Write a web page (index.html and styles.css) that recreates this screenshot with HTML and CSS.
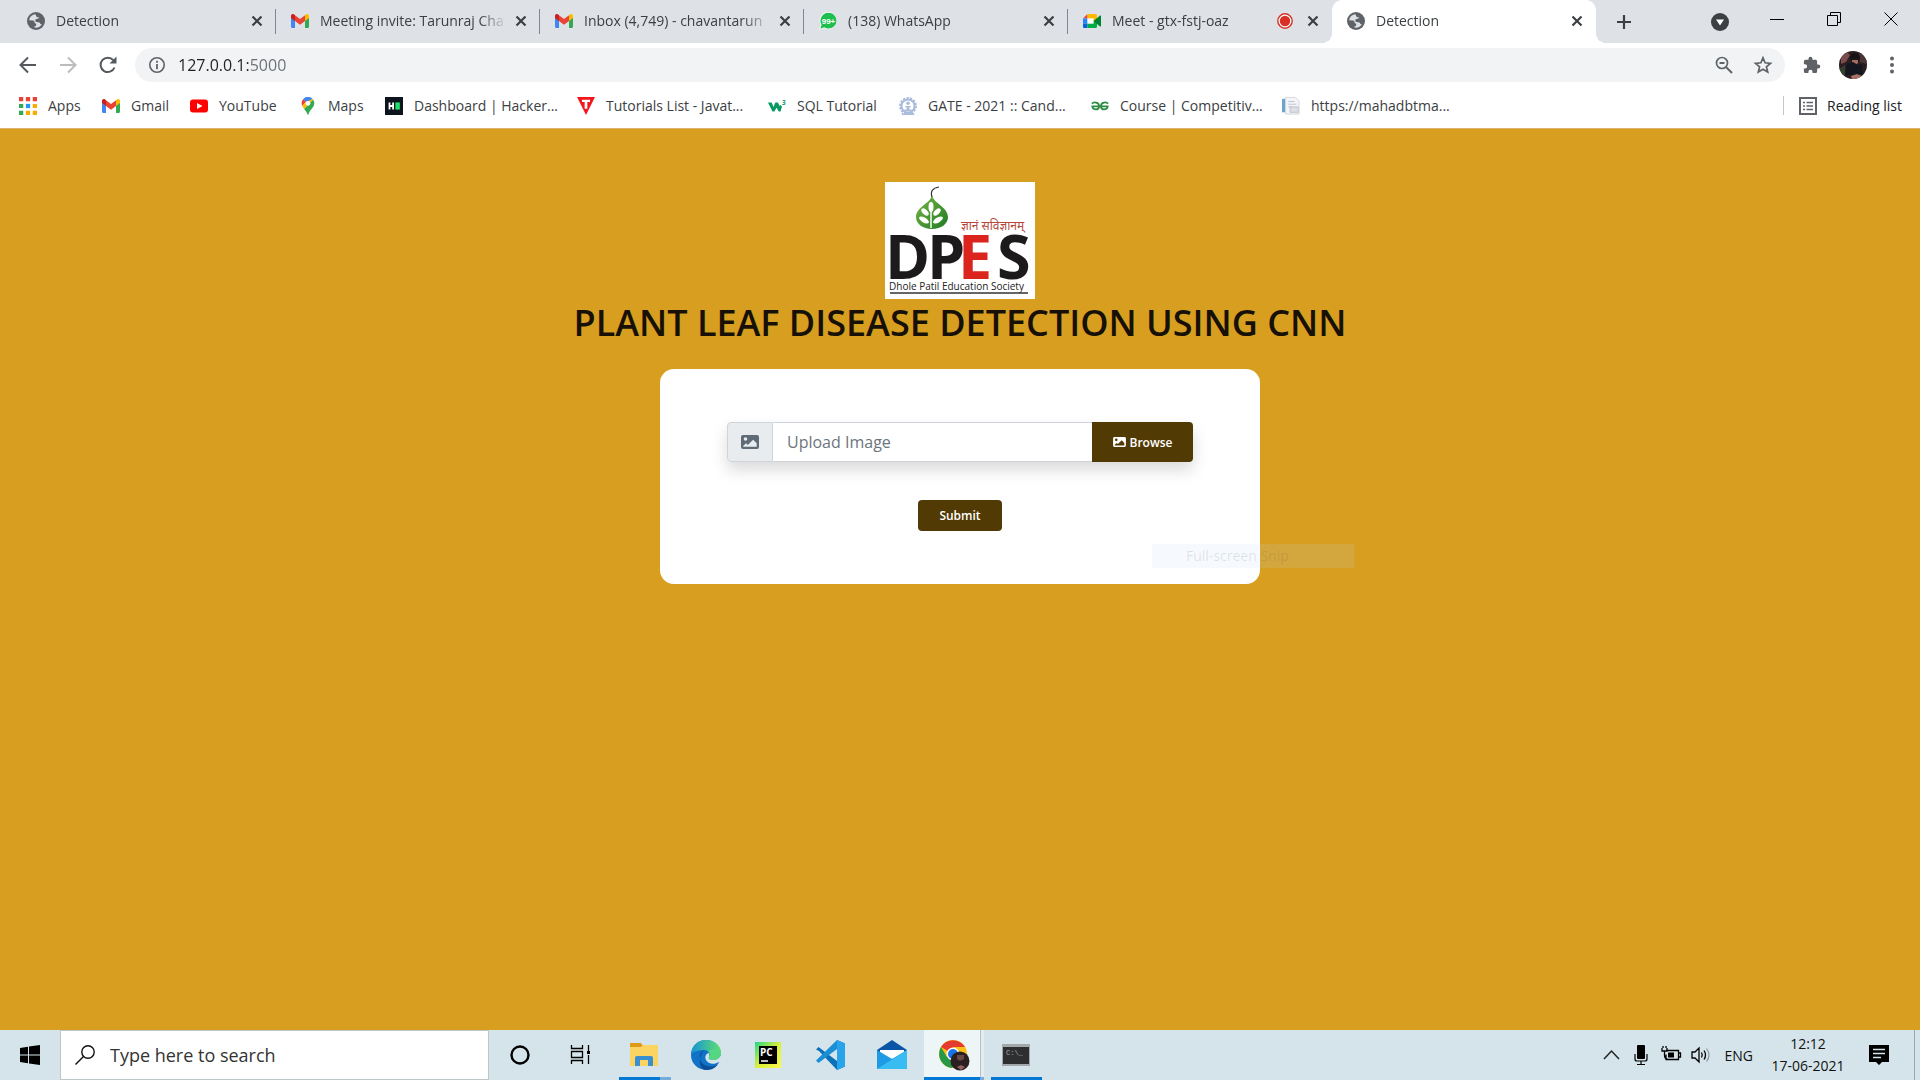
FILE: index.html
```html
<!DOCTYPE html>
<html lang="en">
<head>
<meta charset="utf-8">
<meta name="viewport" content="width=device-width, initial-scale=1">
<title>Detection</title>
<link rel="stylesheet" href="styles.css">
</head>
<body>
<svg class="defs" aria-hidden="true">
  <symbol id="globe" viewBox="0 0 18 18"><circle cx="9" cy="9" r="9" fill="#5f6368"/><path d="M8.2 2.2C5 2.700 2.400 5 2.200 8.300l3.300 0.200c1.500 0 2 .6 2 1.700 0 1 .6 1.200 1.700 1.300v1.700c-.1.700-.8 1-1.700 1v1.400c3 .6 6.200-.9 7.500-3.600-.9.400-1.600.2-1.900-.6-.4-1-1-1.200-2.200-1.200-1.900 0-2.600-.6-2.600-1.700s.8-1.800 2.100-1.800c1.200 0 1.800-.5 1.900-1.400-1.800.3-2.900-.1-3.100-1.300-.1-.8-.6-1.100-1-1.800z" fill="#dee1e6"/></symbol>
  <symbol id="gmail" viewBox="0 0 18 14"><path d="M0 2v10.500C0 13.400.6 14 1.500 14H4V5z" fill="#4285f4"/><path d="M18 2v10.500c0 .9-.6 1.500-1.500 1.500H14V5z" fill="#34a853"/><path d="M4 1.200V7l5 3.800L14 7V1.200L9 5z" fill="#ea4335"/><path d="M0 2v2l4 3V1.200L3.200.6C1.800-.5 0 .4 0 2z" fill="#c5221f"/><path d="M18 2v2l-4 3V1.200l.8-.6C16.200-.5 18 .4 18 2z" fill="#fbbc04"/></symbol>
  <symbol id="close" viewBox="0 0 12 12"><path d="M1.500 1.500l9 9m0-9l-9 9" stroke="#3c4043" stroke-width="2.200" fill="none"/></symbol>
  <symbol id="picture" viewBox="0 0 18 14"><path fill="currentColor" fill-rule="evenodd" d="M2 0h14a2 2 0 0 1 2 2v10a2 2 0 0 1-2 2H2a2 2 0 0 1-2-2V2a2 2 0 0 1 2-2zm2.500 2.200a1.800 1.800 0 1 0 0 3.600 1.800 1.800 0 0 0 0-3.600zM2.300 11.800h13.400V8.300l-3.600-3.600-5.300 5.200-1.700-1.600-2.800 2.500z"/></symbol>
</svg>

<header class="browser">
  <div class="tabstrip">
    <div class="tabs">
      <div class="tab"><svg class="favicon"><use href="#globe"/></svg><a class="tab-title" href="#">Detection</a><button class="tab-close" aria-label="Close tab"><svg><use href="#close"/></svg></button></div>
      <div class="tab"><svg class="favicon"><use href="#gmail"/></svg><a class="tab-title" href="#">Meeting invite: Tarunraj Cha</a><button class="tab-close" aria-label="Close tab"><svg><use href="#close"/></svg></button></div>
      <div class="tab"><svg class="favicon"><use href="#gmail"/></svg><a class="tab-title" href="#">Inbox (4,749) - chavantarun</a><button class="tab-close" aria-label="Close tab"><svg><use href="#close"/></svg></button></div>
      <div class="tab"><svg class="favicon" viewBox="0 0 18 18"><path d="M9.500 0A8.500 8.500 0 1 1 5.200 16L0 18l1.800-5.300A8.500 8.500 0 0 1 9.500 0z" fill="#fff"/><path d="M9.500.8A7.900 7.900 0 1 1 5.200 15.300L1.300 16.700l1.300-4A7.900 7.900 0 0 1 9.500.8z" fill="#1fbf4f"/><text x="9.500" y="12" class="wa-count">99+</text></svg><a class="tab-title" href="#">(138) WhatsApp</a><button class="tab-close" aria-label="Close tab"><svg><use href="#close"/></svg></button></div>
      <div class="tab no-divider"><svg class="favicon" viewBox="0 0 18 18"><path d="M4.500 2v4.500H0z" fill="#ea4335"/><path d="M0 6.500h4.500v5H0z" fill="#2684fc"/><path d="M0 11.500h4.500V16H1.300A1.300 1.300 0 0 1 0 14.700z" fill="#0066da"/><path d="M4.500 2h8A1.500 1.500 0 0 1 14 3.500V8l-3.500 1.500v-3h-6z" fill="#ffba00"/><path d="M4.500 11.500h6v-3L14 10v4.500a1.500 1.500 0 0 1-1.500 1.500h-8z" fill="#00ac47"/><path d="M4.500 6.500h6v5h-6z" fill="#fff"/><path d="M10.500 9L17 3.500c.4-.3 1 0 1 .5v10c0 .5-.6.8-1 .5z" fill="#00832d"/></svg><a class="tab-title" href="#">Meet - gtx-fstj-oaz</a><svg class="rec" viewBox="0 0 16 16"><circle cx="8" cy="8" r="7.200" fill="#fff" stroke="#d93025" stroke-width="1.400"/><circle cx="8" cy="8" r="5.200" fill="#d93025"/></svg><button class="tab-close" aria-label="Close tab"><svg><use href="#close"/></svg></button></div>
      <div class="tab active"><svg class="favicon"><use href="#globe"/></svg><a class="tab-title" href="#">Detection</a><button class="tab-close" aria-label="Close tab"><svg><use href="#close"/></svg></button></div>
      <button class="new-tab" aria-label="New tab"><svg viewBox="0 0 16 16"><path d="M8 1v14M1 8h14" stroke="#3c4043" stroke-width="2.200"/></svg></button>
    </div>
    <div class="window-controls">
      <button aria-label="Search tabs"><svg class="down" viewBox="0 0 18 18"><circle cx="9" cy="9" r="9" fill="#3c4043"/><path d="M5 6.500h8l-4 6z" fill="#fff"/></svg></button>
      <button aria-label="Minimize"><svg viewBox="0 0 14 14"><path d="M0 7.500h14" stroke="#000"/></svg></button>
      <button aria-label="Restore"><svg viewBox="0 0 14 14"><path d="M.5 3.500h10v10H.5zM3.500 3.500v-3h10v10h-3" stroke="#000" fill="none"/></svg></button>
      <button aria-label="Close"><svg viewBox="0 0 14 14"><path d="M.5.500l13 13m0-13l-13 13" stroke="#000"/></svg></button>
    </div>
  </div>

  <div class="toolbar">
    <button aria-label="Back"><svg viewBox="0 0 18 18"><path d="M17 9H2m7-7.500L1.500 9 9 16.500" fill="none" stroke="#55595e" stroke-width="2"/></svg></button>
    <button aria-label="Forward"><svg viewBox="0 0 18 18"><path d="M1 9h15M9 1.500L16.500 9 9 16.500" fill="none" stroke="#babcbe" stroke-width="2"/></svg></button>
    <button aria-label="Reload"><svg viewBox="0 0 18 18"><path d="M15.500 11.500A7.200 7.200 0 1 1 14.300 4.200" fill="none" stroke="#55595e" stroke-width="2"/><path d="M17.500.500v7h-7z" fill="#55595e"/></svg></button>
    <div class="omnibox">
      <svg viewBox="0 0 18 18"><circle cx="9" cy="9" r="7.200" fill="none" stroke="#5f6368" stroke-width="1.600"/><path d="M9 4.700v2M9 8v5.200" stroke="#5f6368" stroke-width="1.800"/></svg>
      <input class="url" type="text" aria-label="Address" value="127.0.0.1:5000">
      <button aria-label="Zoom"><svg viewBox="0 0 18 18"><circle cx="7" cy="7" r="5.500" fill="none" stroke="#5f6368" stroke-width="1.700"/><path d="M11 11l6 6M4.500 7h5" stroke="#5f6368" stroke-width="1.900"/></svg></button>
      <button aria-label="Bookmark"><svg viewBox="0 0 18 18"><path d="M9 1.800l2.100 5 5.400.5-4.100 3.500 1.300 5.300L9 13.300l-4.700 2.800 1.300-5.300L1.500 7.300l5.400-.5z" fill="none" stroke="#5f6368" stroke-width="1.700"/></svg></button>
    </div>
    <button aria-label="Extensions"><svg viewBox="0 0 20 20"><path d="M17 9.500h-1.300V6a1.700 1.700 0 0 0-1.700-1.700h-3.500V3a2.200 2.200 0 0 0-4.400 0v1.300H2.700A1.700 1.700 0 0 0 1 6v3.300h1.300a2.300 2.300 0 0 1 0 4.600H1v3.300A1.800 1.800 0 0 0 2.700 19H6v-1.300a2.300 2.300 0 0 1 4.600 0V19H14a1.700 1.700 0 0 0 1.700-1.800v-3.300H17a2.200 2.200 0 0 0 0-4.400z" fill="#5f6368"/></svg></button>
    <button class="avatar" aria-label="Profile"><svg viewBox="0 0 28 28"><clipPath id="face"><circle cx="14" cy="14" r="14"/></clipPath><g clip-path="url(#face)"><path d="M0 0h28v28H0z" fill="#2a1d20"/><path d="M2 6l6-5 3 3-4 7-5 2z" fill="#7a4d4c"/><path d="M20 0l8 5v8l-7-2z" fill="#4c3436"/><circle cx="16" cy="7" r="5" fill="#171216"/><path d="M13 8h6v4l-3 2-3-2z" fill="#a06d5d"/><path d="M12 7h8v2h-8z" fill="#1c1519"/><path d="M8 13l6-2 5 3 4-1 1 11H6z" fill="#14161f"/><path d="M12 25l6-2 5 2-2 3h-8z" fill="#a86f62"/><path d="M0 18l6-4v10l-4 1z" fill="#31402c"/></g></svg></button>
    <button aria-label="Menu"><svg viewBox="0 0 18 18" fill="#5f6368"><circle cx="9" cy="2.500" r="2"/><circle cx="9" cy="9" r="2"/><circle cx="9" cy="15.500" r="2"/></svg></button>
  </div>

  <nav class="bookmarks">
    <div class="bookmark-list">
      <a href="#"><svg viewBox="0 0 17 17"><path fill="#ea4335" d="M0 0h4v4H0zM6.500 0h4v4h-4zM13 0h4v4h-4z"/><path fill="#34a853" d="M0 6.500h4v4H0zM0 13h4v4H0z"/><path fill="#2196f3" d="M6.500 6.500h4v4h-4z"/><path fill="#f9ab00" d="M13 6.500h4v4h-4zM6.500 13h4v4h-4zM13 13h4v4h-4z"/></svg>Apps</a>
      <a href="#"><svg viewBox="0 0 18 18"><use href="#gmail" y="2" width="18" height="14"/></svg>Gmail</a>
      <a href="#"><svg viewBox="0 0 18 18"><rect y="2.500" width="18" height="13" rx="3" fill="#f00"/><path d="M7 6l5.500 3L7 12z" fill="#fff"/></svg>YouTube</a>
      <a href="#"><svg viewBox="0 0 18 20"><path d="M9 0a7 7 0 0 0-5.400 2.500L7 5.400z" fill="#1a73e8"/><path d="M3.600 2.500A7 7 0 0 0 2.700 10l4-4.700z" fill="#ea4335"/><path d="M9 0L5.800 6.200l5.400 1.300 3.200-5A7 7 0 0 0 9 0z" fill="#4285f4"/><path d="M2.700 10l2 3.200L14.800 3A7 7 0 0 0 14 2L6.700 5.300z" fill="#fbbc04"/><path d="M14.800 3L4.700 13.200C6.500 15.500 8 17 8.200 19c.2 1 1.400 1 1.600 0C10.500 14.500 16 12 16 7a7 7 0 0 0-1.200-4z" fill="#34a853"/><path d="M3.600 2.500A7 7 0 0 1 13.500 1.700L9 4.500z" fill="#4285f4"/><circle cx="9" cy="7" r="2.600" fill="#fff"/></svg>Maps</a>
      <a href="#"><svg viewBox="0 0 20 20"><path d="M0 0h20v20H0z" fill="#0d141e"/><path d="M4 6h2v3h2V6h2v8H8v-3H6v3H4z" fill="#fff"/><path d="M11.500 6h5v8h-5z" fill="#1ee06b"/></svg>Dashboard | Hacker...</a>
      <a href="#"><svg viewBox="0 0 20 20"><path d="M0 0h20L10 20z" fill="#f4161c"/><path d="M5.500 3h9v2.500h-3V13h-3V5.500h-3z" fill="#fff"/></svg>Tutorials List - Javat...</a>
      <a href="#"><svg viewBox="0 0 20 20"><path d="M0 6h4l2.200 5L8 6h3l2 4 1-1 1.500 1.500L14 16h-2l-2.500-4L7 16H5z" fill="#059862"/><text x="15.500" y="9" class="w3-power">3</text></svg>SQL Tutorial</a>
      <a href="#"><svg viewBox="0 0 20 20"><circle cx="10" cy="10" r="8.700" fill="none" stroke="#a9badb" stroke-width="2.400" stroke-dasharray="2.500 1.400"/><circle cx="10" cy="10" r="7.300" fill="none" stroke="#a9badb" stroke-width="2.200"/><circle cx="10" cy="7" r="2" fill="#a9badb"/><path d="M7 10h6v1.500H7zM8.500 11h3v3h-3zM6 14h8v1.500H6zM3 18h14v2H3z" fill="#a9badb"/></svg>GATE - 2021 :: Cand...</a>
      <a href="#"><svg viewBox="0 0 20 20"><path d="M1 7.300C3 5 9 5.500 9 10.200 9 15 2 15 1.500 10.500H18.500C18 15 11 15 11 10.200 11 5.500 17 5 19 7.300" fill="none" stroke="#2f8d46" stroke-width="2"/></svg>Course | Competitiv...</a>
      <a href="#"><svg viewBox="0 0 20 20"><path d="M0 2h4v15H0z" fill="#69a5cf"/><path d="M4 .5h11l4 4V19H4z" fill="#f5f5f7" stroke="#d3d5da"/><path d="M7 5h7M7 8h9M7 11h5" stroke="#b9bec9"/><path d="M9 11h9v6H9z" fill="#dcdfe5" stroke="#bdc2cc"/></svg>https://mahadbtma...</a>
    </div>
    <a class="reading-list" href="#"><svg viewBox="0 0 18 18"><path d="M1 1h16v16H1z" fill="none" stroke="#5f6368" stroke-width="2"/><path d="M4 5.500h2m1.500 0H14M4 9h2m1.500 0H14m-10 3.500h2m1.500 0H14" stroke="#5f6368" stroke-width="1.700"/></svg>Reading list</a>
  </nav>
</header>

<main class="page">
  <svg class="logo" viewBox="0 0 150 117" role="img" aria-label="DPES">
    <defs><linearGradient id="leaf" x1="0" y1="0" x2="1" y2="1"><stop offset="0" stop-color="#79b843"/><stop offset="1" stop-color="#1e7a25"/></linearGradient></defs>
    <path d="M0 0h150v117H0z" fill="#fff"/>
    <path d="M47 13c1 8 16 12 16 22 0 7-7 12-16 12s-16-5-16-12c0-10 15-14 16-22z" fill="url(#leaf)"/>
    <path d="M47 15c-2-6 1-9 7-10" fill="none" stroke="#333" stroke-width="1.200"/>
    <path d="M46 46V29" stroke="#fff" stroke-width="1.500"/>
    <g fill="#fff"><ellipse cx="46" cy="25" rx="2.500" ry="5"/><ellipse cx="40" cy="30" rx="2.500" ry="4.500" transform="rotate(-45 40 30)"/><ellipse cx="52" cy="30" rx="2.500" ry="4.500" transform="rotate(45 52 30)"/><ellipse cx="39" cy="38" rx="2.500" ry="5.500" transform="rotate(-60 39 38)"/><ellipse cx="53" cy="38" rx="2.500" ry="5.500" transform="rotate(60 53 38)"/></g>
    <text x="76" y="48" class="logo-motto">ज्ञानं सविज्ञानम्</text>
    <text y="97" class="logo-name"><tspan x="0">D</tspan><tspan x="42">P</tspan><tspan x="73" class="logo-red">E</tspan><tspan x="112">S</tspan></text>
    <text x="4" y="108" class="logo-society">Dhole Patil Education Society</text>
    <path d="M5 111h138" stroke="#333" stroke-width="1.500"/>
  </svg>
  <h1>PLANT LEAF DISEASE DETECTION USING CNN</h1>
  <form class="card">
    <div class="upload">
      <label class="upload-icon" for="upload-name" aria-label="Image"><svg><use href="#picture"/></svg></label>
      <input id="upload-name" type="text" placeholder="Upload Image">
      <button type="button" class="browse"><svg><use href="#picture"/></svg>Browse</button>
    </div>
    <button type="submit" class="submit">Submit</button>
    <div class="snip">Full-screen Snip</div>
  </form>
</main>

<footer class="taskbar">
  <button class="start" aria-label="Start"><svg viewBox="0 0 20 20"><path d="M0 3l8-1.200v7.700H0zM9 1.600L20 0v9.500H9zM0 10.500h8v7.700L0 17zM9 10.500h11V20L9 18.400z"/></svg></button>
  <div class="search">
    <svg viewBox="0 0 20 20"><circle cx="13" cy="7" r="6.200" fill="none" stroke="#111" stroke-width="1.400"/><path d="M8.500 11.500L.5 19.500" stroke="#111" stroke-width="1.400"/></svg>
    <input type="text" aria-label="Search" placeholder="Type here to search">
  </div>
  <div class="apps">
    <button aria-label="Cortana"><svg viewBox="0 0 30 30"><circle cx="15" cy="15" r="8.500" fill="none" stroke="#000" stroke-width="2.400"/></svg></button>
    <button aria-label="Task view"><svg viewBox="0 0 30 30"><path d="M4.500 5v3.500h11V5M4.500 24v-3.500h11V24M4.500 11.500h11v6h-11zM21.500 5v6m0 4v9" fill="none" stroke="#000" stroke-width="1.300"/><path d="M20 11h3v3h-3z"/></svg></button>
    <button class="running grouped" aria-label="File Explorer"><svg viewBox="0 0 30 30"><path d="M1 3h11l2 3v3H1z" fill="#e09a1a"/><path d="M1 7h11l2-2h15v21H1z" fill="#fcd462"/><path d="M6 26V18a2 2 0 0 1 2-2h14a2 2 0 0 1 2 2v8h-5v-6h-8v6z" fill="#3a8fd0"/></svg></button>
    <button aria-label="Edge"><svg viewBox="0 0 30 30"><defs><linearGradient id="edge-top"><stop offset="0" stop-color="#1793d4"/><stop offset="1" stop-color="#5fe070"/></linearGradient></defs><circle cx="15" cy="15" r="15" fill="#1173c7"/><path d="M0 14C1 5 7 0 15 0c9 0 15 6 15 12.500 0 5-4 7.500-8 7.500-3 0-5-1-4-3 2-4-1-7-5-7C7 10 2 12 0 14z" fill="url(#edge-top)"/><path d="M14 10c-6 2-7 8-3 13 4 4 11 5 16 1-3 5-8 6-12 6C7 30 7 15 14 10z" fill="#0c4f97"/><path d="M18 13c-2 0-5 3-3 7s8 5 13 2l2 0V15c-2 4-5 5-8 5-3 0-5-1-4-3z" fill="#d5e4ea"/><path d="M30 12.500c0 5-4 7.500-8 7.500-3 0-5-1-4-3 1-2 1-4-1-6L28 8z" fill="#55d681"/></svg></button>
    <button aria-label="PyCharm"><svg viewBox="0 0 30 30"><defs><linearGradient id="pc" x1="0" y1="0" x2="1" y2="1"><stop offset="0" stop-color="#1fd789"/><stop offset=".5" stop-color="#d8f03c"/><stop offset="1" stop-color="#fcf84a"/></linearGradient></defs><path d="M2 2h26v26H2z" fill="url(#pc)"/><path d="M6 6h18v18H6z"/><text x="7" y="16" class="pc-text">PC</text><path d="M8 21h7" stroke="#fff" stroke-width="1.500"/></svg></button>
    <button aria-label="Visual Studio Code"><svg viewBox="0 0 30 30"><path d="M22 0l8 3.500v23L22 30 4 11l-3-1.500L3.500 7 22 21z" fill="#0a70b8"/><path d="M22 0v9L3.500 23 1 20.500z" fill="#1b8fd6"/><path d="M22 0l8 3.500v23L22 30z" fill="#29a4ea"/></svg></button>
    <button aria-label="Mail"><svg viewBox="0 0 30 30"><path d="M0 10L15 0l15 10v6H0z" fill="#0a55a5"/><path d="M3 10h24v8H3z" fill="#fff"/><path d="M0 10l15 9 15-9v19H0z" fill="#1f9ae4"/><path d="M0 29l30-19v19z" fill="#38bdf2"/></svg></button>
    <button class="running current" aria-label="Chrome"><svg viewBox="0 0 30 30"><circle cx="14" cy="14" r="14" fill="#fbc116"/><path d="M14 14L2 7A14 14 0 0 1 26 7H14z" fill="#e33b2e"/><path d="M2 7a14 14 0 0 0 11 21l6-10-11-1z" fill="#279847"/><circle cx="14" cy="14" r="6.500" fill="#fff"/><circle cx="14" cy="14" r="5" fill="#1a73e8"/><circle cx="21" cy="21" r="9.500" fill="#2a2022"/><path d="M18 15h7v4l-4 2-3-2z" fill="#6a4a46"/><path d="M18 27l4-2 4 2-4 3z" fill="#94605a"/></svg></button>
    <button class="running" aria-label="Command Prompt"><svg viewBox="0 0 30 30"><path d="M1 4h28v22H1z" fill="#a3a8ab"/><path d="M2 7h26v17H2z" fill="#2d2f31"/><text x="5" y="15" class="cmd-text">C:\_</text></svg></button>
  </div>
  <div class="tray">
    <button aria-label="Show hidden icons"><svg viewBox="0 0 20 20"><path d="M3 14l7.500-8 7.500 8" fill="none" stroke="#222" stroke-width="1.500"/></svg></button>
    <svg viewBox="0 0 20 20"><rect x="6" width="8" height="14" rx="1"/><path d="M4 9v5q0 2 2 2h8q2 0 2-2V9M10 16v3.500M6 19.500h8" fill="none" stroke="#000" stroke-width="1.200"/></svg>
    <svg viewBox="0 0 20 20"><path d="M5 5.500h12.500v9H5v-5M18 8h1.500v4H18M3.500 6v4q0 4 3 4M1 3v3h5V3M2 1v2m3-2v2" fill="none" stroke="#000" stroke-width="1.300"/><path d="M7 7.500h6v5H7z"/></svg>
    <svg viewBox="0 0 20 20"><path d="M1 7h3l4-4v14l-4-4H1zM10.500 7.500q1.500 2.500 0 5M13 5.500q3 4.500 0 9" fill="none" stroke="#000" stroke-width="1.300"/><path d="M15.500 3.500q5 6.500 0 13" fill="none" stroke="#8b9599" stroke-width="1.200"/></svg>
    <span class="lang">ENG</span>
    <time class="clock"><span>12:12</span><span>17-06-2021</span></time>
    <button class="notes" aria-label="Notifications"><svg viewBox="0 0 20 20"><path d="M0 0h20v17h-7l-3 3-3-3H0z"/><path d="M4 4.500h12M4 8.500h12M4 12.500h8" stroke="#d5e4ea" stroke-width="1.300"/></svg></button>
  </div>
</footer>
</body>
</html>
```
FILE: styles.css
```css
* { box-sizing: border-box; }
body {
  margin: 0;
  min-height: 100vh;
  display: flex;
  flex-direction: column;
  font-family: "Open Sans", "Noto Sans", sans-serif;
  font-size: 14px;
  color: #3c4043;
}
button { border: 0; padding: 0; background: none; font: inherit; color: inherit; display: grid; place-items: center; }
input { font: inherit; border: 0; padding: 0; min-width: 0; outline: 0; background: none; }
a { color: inherit; text-decoration: none; }
svg { display: block; flex: none; overflow: visible; }
.defs { width: 0; height: 0; position: absolute; }

/* Tab strip */
.browser { background: #fff; border-bottom: 1px solid #d9b36a; }
.tabstrip { display: flex; justify-content: space-between; height: 43px; background: #dee1e6; }
.tabs { display: flex; padding-left: 12px; min-width: 0; }
.tab { display: flex; align-items: center; width: 264px; padding: 0 8px 2px 15px; position: relative; min-width: 0; }
.tab:not(.active):not(.no-divider)::after { content: ""; position: absolute; right: 0; top: 9px; width: 1px; height: 25px; background: #80868b; }
.favicon { width: 18px; height: 18px; margin-right: 11px; }
.tab-title { flex: 1; overflow: hidden; white-space: nowrap; mask-image: linear-gradient(90deg, #000 calc(100% - 28px), transparent); }
.tab-close { width: 22px; height: 22px; margin-left: 3px; }
.tab-close svg { width: 12px; height: 12px; }
.rec { width: 16px; height: 16px; margin-right: 6px; }
.tab.active { background: #fff; border-radius: 10px 10px 0 0; }
.tab.active::before, .tab.active::after { content: ""; position: absolute; bottom: 0; width: 10px; height: 10px; }
.tab.active::before { left: -10px; background: radial-gradient(circle at 0 0, transparent 10px, #fff 10px); }
.tab.active::after { right: -10px; background: radial-gradient(circle at 100% 0, transparent 10px, #fff 10px); }
.new-tab { width: 56px; }
.new-tab svg { width: 16px; height: 16px; }
.window-controls { display: flex; height: 37px; padding-right: 1px; }
.window-controls button { width: 57px; }
.window-controls svg { width: 14px; height: 14px; }
.window-controls .down { width: 18px; height: 18px; margin-top: 6px; }

/* Toolbar */
.toolbar { display: flex; align-items: center; height: 44px; padding: 0 10px 0 8px; }
.toolbar button { width: 40px; height: 36px; }
.toolbar svg { width: 18px; height: 18px; }
.omnibox { flex: 1; display: flex; align-items: center; gap: 1px; height: 34px; margin: 0 7px; padding: 0 4px 0 13px; border-radius: 17px; background: #f1f3f4; }
.url { flex: 1; margin-left: 11px; font-size: 16px; color: transparent; background: linear-gradient(90deg, #202124 71px, #6b6f74 71px); background-clip: text; -webkit-background-clip: text; }
.toolbar .avatar { width: 42px; }
.toolbar .avatar svg { width: 28px; height: 28px; }
.toolbar button:last-child { width: 36px; }

/* Bookmarks */
.bookmarks { display: flex; justify-content: space-between; align-items: center; height: 41px; padding: 0 18px 4px 18px; }
.bookmark-list { display: grid; grid-template-columns: 83px 88px 109px 86px 192px 191px 131px 192px 191px 180px; white-space: nowrap; }
.bookmarks a { display: flex; align-items: center; gap: 10px; min-width: 0; }
.bookmarks svg { width: 20px; height: 18px; }
.bookmarks .reading-list { gap: 9px; border-left: 1px solid #c4c7cb; padding-left: 14px; color: #202124; white-space: nowrap; }

/* Page */
.page { flex: 1; display: flex; flex-direction: column; align-items: center; padding: 53px 16px; background: #d79e20; }
.logo { width: 150px; height: 117px; }
h1 { margin: 0; font-size: 36px; line-height: 48px; font-weight: 600; color: #161006; text-align: center; }
.logo-motto { font: 12px "Noto Sans", "Noto Sans Devanagari", sans-serif; fill: #b5483c; }
.logo-name { font: 700 61px "Open Sans", sans-serif; fill: #1d1a1b; }
.logo-red { fill: #dc241f; }
.logo-society { font: 10px "Open Sans", sans-serif; fill: #222; }
.card { position: relative; display: flex; flex-direction: column; align-items: center; gap: 38px; width: 100%; max-width: 600px; margin-top: 22px; padding: 53px 67px; border-radius: 14px; background: #fff; }
.upload { display: flex; align-self: stretch; height: 40px; border-radius: 4px; box-shadow: 0 8px 16px rgba(0, 0, 0, .15); }
.upload-icon { display: grid; place-items: center; width: 46px; color: #5f6b76; background: #e9ecef; border: 1px solid #ced4da; border-radius: 4px 0 0 4px; }
.upload-icon svg { width: 18px; height: 14px; }
.upload input { flex: 1; padding: 0 14px; font-size: 16px; border: solid #ced4da; border-width: 1px 0; }
.upload input::placeholder { color: #6c757d; opacity: 1; }
.browse, .submit { background: #523a05; color: #fff; font-size: 12px; font-weight: 600; }
.browse { display: flex; align-items: center; justify-content: center; gap: 4px; width: 101px; border-radius: 0 4px 4px 0; }
.browse svg { width: 13px; height: 10px; }
.submit { width: 84px; height: 31px; border-radius: 4px; }
.snip { position: absolute; top: 175px; left: 492px; width: 202px; height: 24px; padding-left: 34px; line-height: 24px; background: rgba(190, 220, 250, .14); color: rgba(90, 90, 90, .16); }

/* Taskbar */
.taskbar { display: flex; height: 50px; background: #d5e4ea; color: #111; }
.start { width: 60px; }
.start svg { width: 20px; height: 20px; }
.search { display: flex; align-items: center; gap: 15px; flex: 0 1 429px; padding: 0 14px; background: #fff; border: 1px solid #bfc6ca; }
.search svg { width: 20px; height: 20px; }
.search input { flex: 1; font-size: 18px; }
.search input::placeholder { color: #333; opacity: 1; }
.apps { display: flex; }
.apps button { width: 62px; position: relative; }
.apps svg { width: 30px; height: 30px; }
.running::after { content: ""; position: absolute; left: 6px; right: 5px; bottom: 0; height: 3px; background: #0078d4; }
.running.grouped::after { right: 4px; background: linear-gradient(90deg, #0078d4 41px, #78acd8 41px); }
.current { background: linear-gradient(90deg, transparent 1px, #eef5f7 1px, #eef5f7 57px, #b4c2c8 57px, #b4c2c8 58px, #e3edf1 58px, #e3edf1 61px, transparent 61px); }
.running.current::after { left: 1px; right: 1px; background: linear-gradient(90deg, #0078d4 56px, #78acd8 56px); }
.pc-text { font: 700 10px "Open Sans", sans-serif; fill: #fff; }
.cmd-text { font: 7px "Liberation Mono", monospace; fill: #aaa; }
.wa-count { font: 700 8px "Liberation Sans", sans-serif; fill: #fff; text-anchor: middle; }
.w3-power { font: 700 7px "Open Sans", sans-serif; fill: #059862; }
.tray { display: flex; align-items: center; margin-left: auto; margin-right: 5px; padding-right: 19px; gap: 10px; border-right: 1px solid #9aa8ae; }
.tray svg { width: 20px; height: 20px; }
.lang { margin-left: 4px; }
.clock { display: flex; flex-direction: column; align-items: center; width: 90px; line-height: 22px; }
.notes { width: 32px; }
```
